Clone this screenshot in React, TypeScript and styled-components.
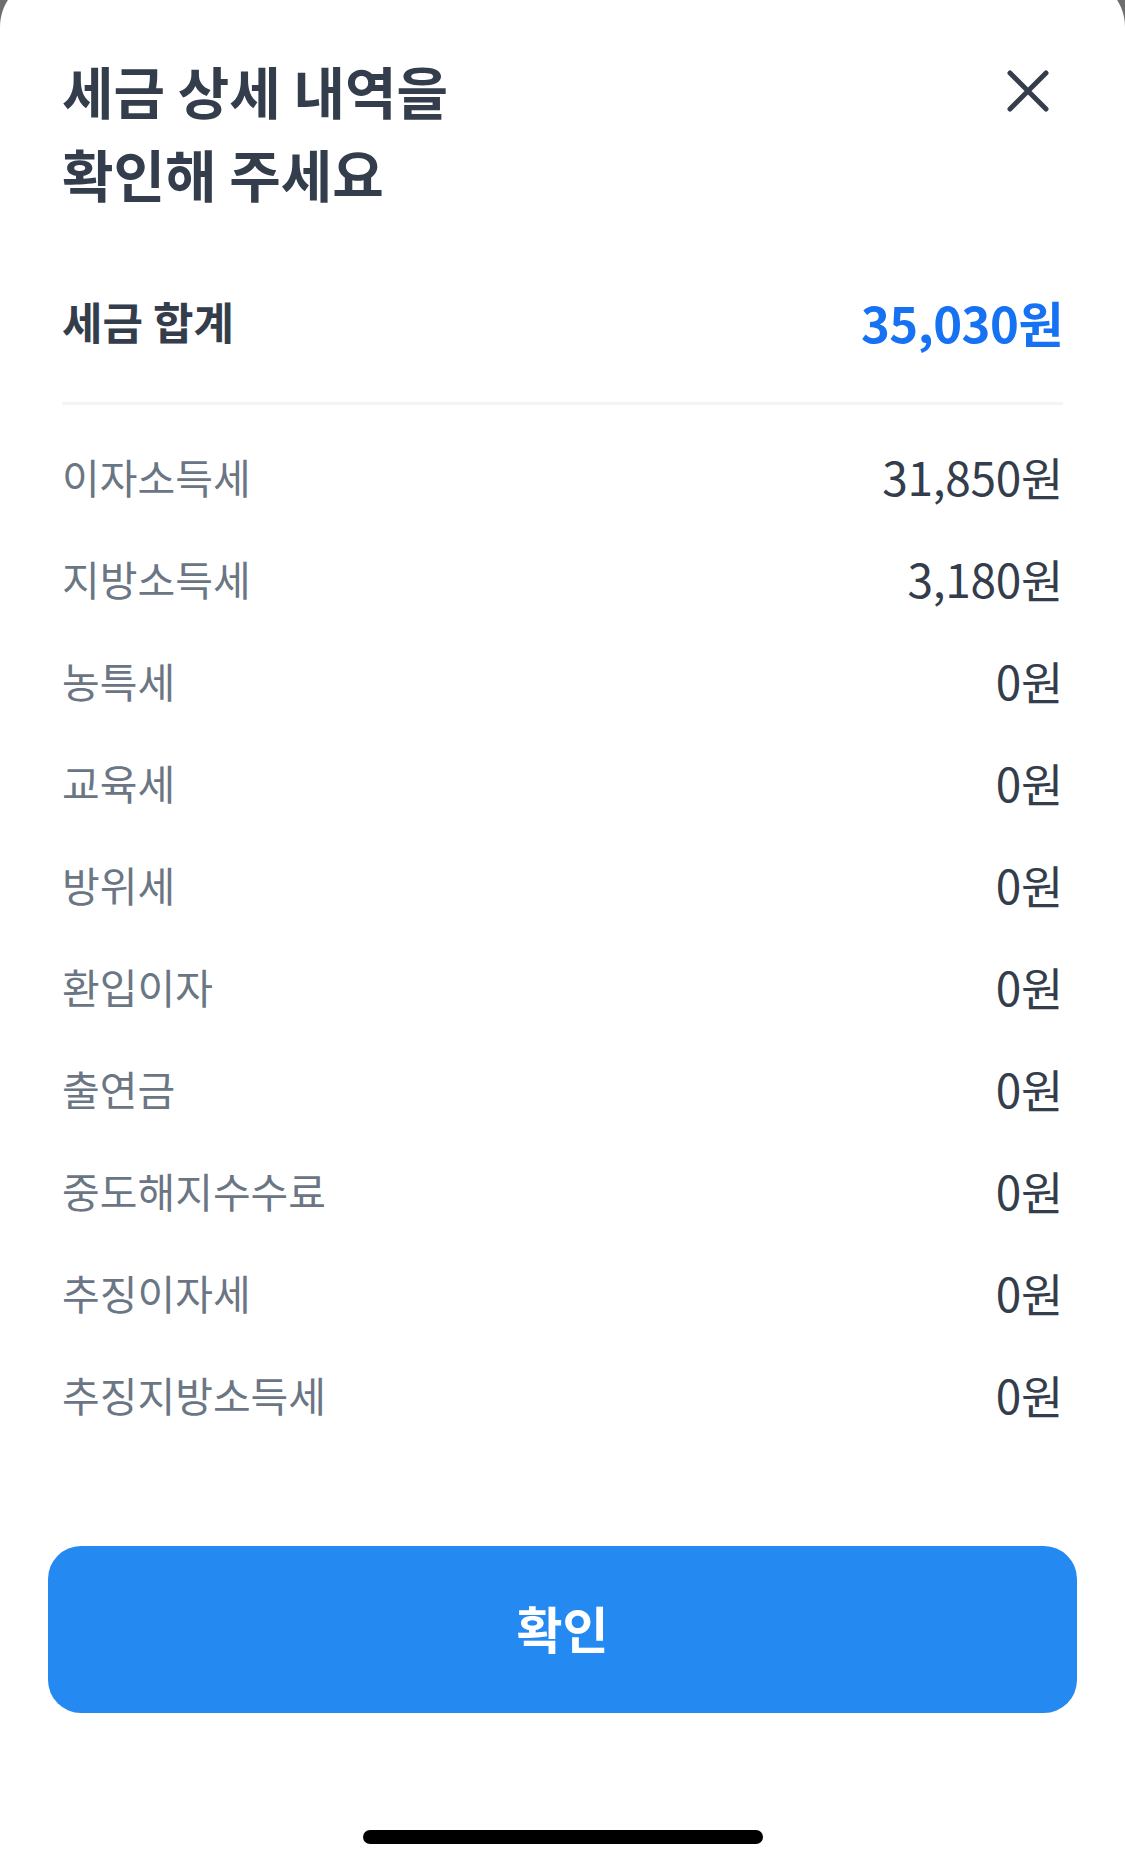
import {FC} from 'react'
import styled, {createGlobalStyle} from 'styled-components'

// tax detail bottom sheet

const GlobalStyle = createGlobalStyle`
  html, body {
    margin: 0;
    padding: 0;
    background: #ffffff;
  }
  body {
    font-family: 'Noto Sans CJK KR', 'Noto Sans', sans-serif;
    -webkit-font-smoothing: antialiased;
  }
`

const Backdrop = styled.div`
  width: 1125px;
  height: 1870px;
  background: #6d6d6d;
  overflow: hidden;
`

const Sheet = styled.div`
  margin-top: -23px;
  height: 1893px;
  background: #ffffff;
  border-radius: 50px 50px 0 0;
  display: flex;
  flex-direction: column;
`

const Content = styled.div`
  padding: 0 62px;
  display: flex;
  flex-direction: column;
`

const Header = styled.div`
  display: flex;
  justify-content: space-between;
  align-items: flex-start;
  padding-top: 71px;
`

const Title = styled.h1`
  margin: 0;
  font-size: 56px;
  line-height: 83px;
  font-weight: 700;
  color: #333d4b;
`

const CloseButton = styled.button`
  margin-top: 11px;
  margin-right: 3px;
  width: 64px;
  height: 64px;
  padding: 0;
  border: 0;
  background: transparent;
  display: flex;
  align-items: center;
  justify-content: center;
  color: #333d4b;
  cursor: pointer;
`

const SumRow = styled.div`
  margin-top: 56px;
  height: 102px;
  display: flex;
  align-items: center;
  justify-content: space-between;
`

const SumLabel = styled.span`
  font-size: 44px;
  font-weight: 700;
  color: #333d4b;
`

const SumValue = styled.span`
  font-size: 49px;
  font-weight: 700;
  letter-spacing: -0.5px;
  color: #1672f3;
`

const Divider = styled.hr`
  margin: 30px 0 0;
  border: 0;
  height: 3px;
  background: #f2f4f6;
`

const List = styled.ul`
  list-style: none;
  margin: 20px 0 0;
  padding: 0;
`

const Row = styled.li`
  height: 102px;
  display: flex;
  align-items: center;
  justify-content: space-between;
`

const Label = styled.span`
  font-size: 41px;
  color: #6b7684;
`

const Value = styled.span`
  font-size: 46px;
  letter-spacing: -0.3px;
  color: #333d4b;
`

const Footer = styled.div`
  padding: 0 48px;
  margin-top: 101px;
`

const ConfirmButton = styled.button`
  width: 100%;
  height: 167px;
  padding: 0 0 6px;
  border: 0;
  border-radius: 33px;
  background: #2589f2;
  color: #ffffff;
  font-family: inherit;
  font-size: 50px;
  font-weight: 700;
  cursor: pointer;
`

const HomeIndicator = styled.div`
  margin: 117px auto 0;
  width: 400px;
  height: 14px;
  border-radius: 7px;
  background: #000000;
`

const taxes = [
  {name: '이자소득세', amount: 31850},
  {name: '지방소득세', amount: 3180},
  {name: '농특세', amount: 0},
  {name: '교육세', amount: 0},
  {name: '방위세', amount: 0},
  {name: '환입이자', amount: 0},
  {name: '출연금', amount: 0},
  {name: '중도해지수수료', amount: 0},
  {name: '추징이자세', amount: 0},
  {name: '추징지방소득세', amount: 0},
]

const won = (n: number) => `${n.toLocaleString('ko-KR')}원`

const CloseIcon: FC = () => (
  <svg width="42" height="42" viewBox="0 0 42 42" fill="none">
    <path
      d="M3 3L39 39M39 3L3 39"
      stroke="currentColor"
      strokeWidth="5"
      strokeLinecap="round"
    />
  </svg>
)

const App: FC = () => {
  const total = taxes.reduce((sum, t) => sum + t.amount, 0)

  return (
    <>
      <GlobalStyle />
      <Backdrop>
        <Sheet>
          <Content>
            <Header>
              <Title>
                세금 상세 내역을
                <br />
                확인해 주세요
              </Title>
              <CloseButton aria-label="닫기">
                <CloseIcon />
              </CloseButton>
            </Header>
            <SumRow>
              <SumLabel>세금 합계</SumLabel>
              <SumValue>{won(total)}</SumValue>
            </SumRow>
            <Divider />
            <List>
              {taxes.map(tax => (
                <Row key={tax.name}>
                  <Label>{tax.name}</Label>
                  <Value>{won(tax.amount)}</Value>
                </Row>
              ))}
            </List>
          </Content>
          <Footer>
            <ConfirmButton>확인</ConfirmButton>
          </Footer>
          <HomeIndicator />
        </Sheet>
      </Backdrop>
    </>
  )
}

export default App
